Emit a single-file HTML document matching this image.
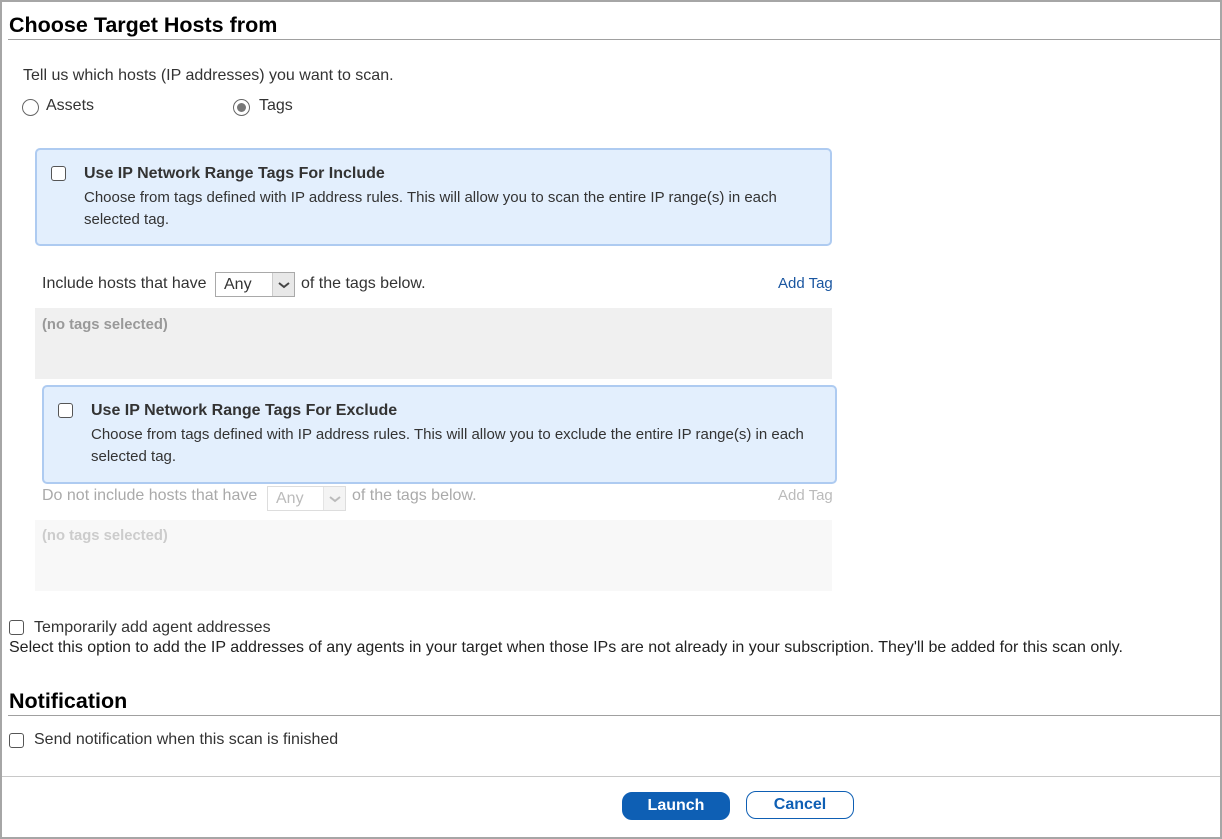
<!DOCTYPE html>
<html><head><style>
*{box-sizing:border-box;margin:0;padding:0}
body{width:1222px;height:839px;position:relative;background:#fff;font-family:"Liberation Sans",Arial,sans-serif;color:#333;overflow:hidden}
.a{position:absolute;white-space:nowrap;line-height:18px}
.frame{position:absolute;left:0;top:0;width:1222px;height:839px;border:2px solid #a6a6a6}
h2{position:absolute;font-size:21.5px;font-weight:bold;color:#000;line-height:24px}
.hr{position:absolute;height:1px;background:#a0a0a0}
.t{font-size:16px;color:#333}
.cb{position:absolute;width:15px;height:15px;border:1px solid #555;border-radius:3px;background:#fff}
.rad{position:absolute;width:17px;height:17px;border:1px solid #666;border-radius:50%;background:#fff}
.box{position:absolute;background:#e3effd;border:2px solid #aecbf1;border-radius:5px}
.gray{position:absolute;background:#f0f0f0}
.sel{position:absolute;height:25px;border:1px solid #a9a9a9;background:#fff;font-size:16px;padding:3px 0 0 8px}
.sel .arr{position:absolute;right:0;top:0;width:22px;height:23px;background:#e8e8e8;border-left:1px solid #ccc}
.link{color:#1a56a0;font-size:15px}
.btn{position:absolute;height:28px;border-radius:10px;font-size:16px;font-weight:bold;text-align:center;line-height:26px}
</style></head><body>
<div class="frame"></div>
<h2 style="left:9px;top:13px">Choose Target Hosts from</h2>
<div class="hr" style="left:8px;top:39px;width:1213px"></div>
<div class="a t" style="left:23px;top:67px">Tell us which hosts (IP addresses) you want to scan.</div>
<div class="rad" style="left:22px;top:99px"></div>
<div class="a t" style="left:46px;top:97px">Assets</div>
<div class="rad" style="left:233px;top:99px"><div style="position:absolute;left:3px;top:3px;width:9px;height:9px;border-radius:50%;background:#777"></div></div>
<div class="a t" style="left:259px;top:97px">Tags</div>

<div class="box" style="left:35px;top:148px;width:797px;height:98px"></div>
<div class="cb" style="left:51px;top:166px"></div>
<div class="a" style="left:84px;top:165px;font-size:16px;font-weight:bold">Use IP Network Range Tags For Include</div>
<div class="a" style="left:84px;top:187px;font-size:15px;line-height:22px;white-space:normal;width:720px">Choose from tags defined with IP address rules. This will allow you to scan the entire IP range(s) in each selected tag.</div>

<div class="a t" style="left:42px;top:275px">Include hosts that have</div>
<div class="sel" style="left:215px;top:272px;width:80px">Any<div class="arr"><svg width="22" height="23"><path d="M6 10l5 4 5-4" stroke="#444" stroke-width="2" fill="none"/></svg></div></div>
<div class="a t" style="left:301px;top:275px">of the tags below.</div>
<div class="a link" style="left:778px;top:275px">Add Tag</div>
<div class="gray" style="left:35px;top:308px;width:797px;height:71px"></div>
<div class="a" style="left:42px;top:316px;font-size:14.8px;font-weight:bold;color:#999">(no tags selected)</div>

<div class="box" style="left:42px;top:385px;width:795px;height:99px"></div>
<div class="cb" style="left:58px;top:403px"></div>
<div class="a" style="left:91px;top:402px;font-size:16px;font-weight:bold">Use IP Network Range Tags For Exclude</div>
<div class="a" style="left:91px;top:424px;font-size:15px;line-height:22px;white-space:normal;width:720px">Choose from tags defined with IP address rules. This will allow you to exclude the entire IP range(s) in each selected tag.</div>

<div class="a t" style="left:42px;top:487px;color:#aaa">Do not include hosts that have</div>
<div class="sel" style="left:267px;top:486px;width:79px;color:#bbb;border-color:#ddd">Any<div class="arr" style="background:#f4f4f4;border-color:#e4e4e4"><svg width="22" height="23"><path d="M6 10l5 4 5-4" stroke="#bbb" stroke-width="2" fill="none"/></svg></div></div>
<div class="a t" style="left:352px;top:487px;color:#aaa">of the tags below.</div>
<div class="a link" style="left:778px;top:487px;color:#bbb">Add Tag</div>
<div class="gray" style="left:35px;top:520px;width:797px;height:71px;background:#f8f8f8"></div>
<div class="a" style="left:42px;top:527px;font-size:14.8px;font-weight:bold;color:#ccc">(no tags selected)</div>

<div class="cb" style="left:9px;top:620px"></div>
<div class="a t" style="left:34px;top:619px">Temporarily add agent addresses</div>
<div class="a t" style="left:9px;top:639px;color:#222">Select this option to add the IP addresses of any agents in your target when those IPs are not already in your subscription. They'll be added for this scan only.</div>

<h2 style="left:9px;top:689px">Notification</h2>
<div class="hr" style="left:8px;top:715px;width:1213px"></div>
<div class="cb" style="left:9px;top:733px"></div>
<div class="a t" style="left:34px;top:731px">Send notification when this scan is finished</div>

<div class="hr" style="left:2px;top:776px;width:1218px;background:#c8c8c8"></div>
<div class="btn" style="left:622px;top:792px;width:108px;background:#0e5fb4;color:#fff;border:1px solid #0e5fb4">Launch</div>
<div class="btn" style="left:746px;top:791px;width:108px;background:#fff;color:#0e5fb4;border:1px solid #0e5fb4">Cancel</div>
</body></html>
